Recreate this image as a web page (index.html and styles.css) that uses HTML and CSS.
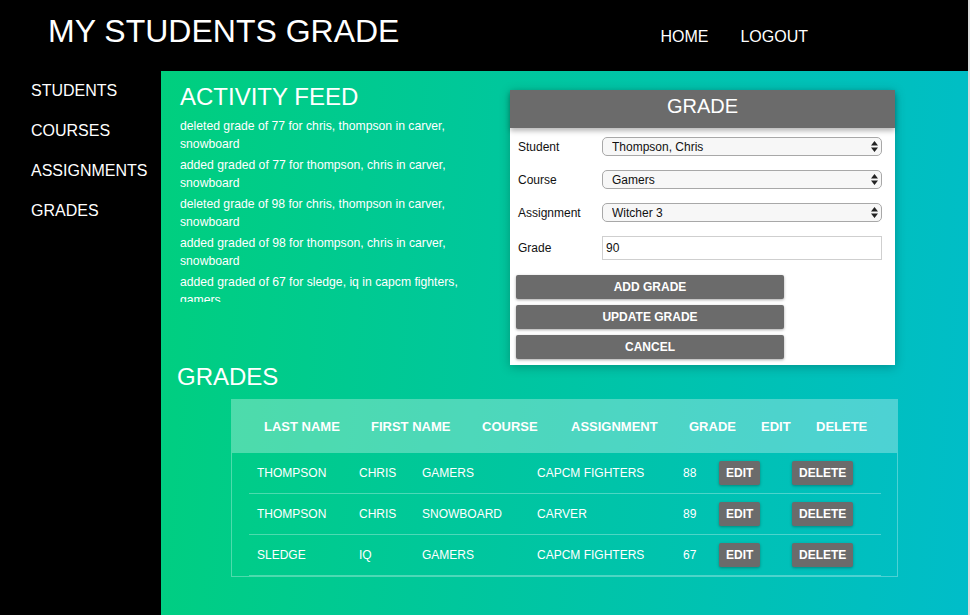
FILE: index.html
```html
<!DOCTYPE html>
<html lang="en">
<head>
<meta charset="utf-8">
<title>My Students Grade</title>
<link rel="stylesheet" href="styles.css">
</head>
<body>
<div class="app">
  <header class="topbar">
    <h1 class="brand">MY STUDENTS GRADE</h1>
    <nav class="topnav">
      <a href="#">HOME</a>
      <a href="#">LOGOUT</a>
    </nav>
  </header>

  <aside class="sidebar">
    <a href="#">STUDENTS</a>
    <a href="#">COURSES</a>
    <a href="#">ASSIGNMENTS</a>
    <a href="#">GRADES</a>
  </aside>

  <main class="content">
    <section class="top-row">
      <div class="feed">
        <h2 class="section-title">ACTIVITY FEED</h2>
        <ul class="feed-list">
          <li>deleted grade of 77 for chris, thompson in carver, snowboard</li>
          <li>added graded of 77 for thompson, chris in carver, snowboard</li>
          <li>deleted grade of 98 for chris, thompson in carver, snowboard</li>
          <li>added graded of 98 for thompson, chris in carver, snowboard</li>
          <li>added graded of 67 for sledge, iq in capcm fighters, gamers</li>
        </ul>
      </div>

      <form class="card">
        <div class="card-head">GRADE</div>
        <div class="card-body">
          <div class="field">
            <label class="label">Student</label>
            <div class="select-wrap">
              <select class="select"><option>Thompson, Chris</option></select>
              <svg class="arrows" width="7" height="11" viewBox="0 0 7 11"><path d="M3.5 0L7 4.5H0Z M0 6.5H7L3.5 11Z" fill="#222"/></svg>
            </div>
          </div>
          <div class="field">
            <label class="label">Course</label>
            <div class="select-wrap">
              <select class="select"><option>Gamers</option></select>
              <svg class="arrows" width="7" height="11" viewBox="0 0 7 11"><path d="M3.5 0L7 4.5H0Z M0 6.5H7L3.5 11Z" fill="#222"/></svg>
            </div>
          </div>
          <div class="field">
            <label class="label">Assignment</label>
            <div class="select-wrap">
              <select class="select"><option>Witcher 3</option></select>
              <svg class="arrows" width="7" height="11" viewBox="0 0 7 11"><path d="M3.5 0L7 4.5H0Z M0 6.5H7L3.5 11Z" fill="#222"/></svg>
            </div>
          </div>
          <div class="field field-input">
            <label class="label">Grade</label>
            <input class="input" type="text" value="90">
          </div>
          <div class="actions">
            <button type="button" class="btn">ADD GRADE</button>
            <button type="button" class="btn">UPDATE GRADE</button>
            <button type="button" class="btn">CANCEL</button>
          </div>
        </div>
      </form>
    </section>

    <section class="grades">
      <h2 class="section-title grades-title">GRADES</h2>
      <div class="table">
        <div class="thead">
          <span>LAST NAME</span>
          <span>FIRST NAME</span>
          <span>COURSE</span>
          <span>ASSIGNMENT</span>
          <span>GRADE</span>
          <span>EDIT</span>
          <span>DELETE</span>
        </div>
        <div class="tbody">
          <div class="tr">
            <span>THOMPSON</span><span>CHRIS</span><span>GAMERS</span><span>CAPCM FIGHTERS</span><span>88</span>
            <span><button type="button" class="btn-sm">EDIT</button></span>
            <span><button type="button" class="btn-sm">DELETE</button></span>
          </div>
          <div class="tr">
            <span>THOMPSON</span><span>CHRIS</span><span>SNOWBOARD</span><span>CARVER</span><span>89</span>
            <span><button type="button" class="btn-sm">EDIT</button></span>
            <span><button type="button" class="btn-sm">DELETE</button></span>
          </div>
          <div class="tr">
            <span>SLEDGE</span><span>IQ</span><span>GAMERS</span><span>CAPCM FIGHTERS</span><span>67</span>
            <span><button type="button" class="btn-sm">EDIT</button></span>
            <span><button type="button" class="btn-sm">DELETE</button></span>
          </div>
        </div>
      </div>
    </section>
  </main>
</div>
</body>
</html>
```

FILE: styles.css
```css
html, body {
  margin: 0;
  padding: 0;
}

body {
  font-family: "Liberation Sans", Arial, Helvetica, sans-serif;
  background: #dcdcdc;
  overflow: hidden;
}

.app {
  display: grid;
  grid-template-columns: 161px 807px;
  grid-template-rows: 71px 544px;
  width: 968px;
  height: 615px;
  overflow: hidden;
}

/* Top bar */
.topbar {
  grid-column: 1 / -1;
  background: #000;
  display: flex;
  align-items: flex-start;
  padding: 0 160px 0 48px;
}

.brand {
  margin: 15px 0 0;
  font-size: 32px;
  line-height: 32px;
  font-weight: normal;
  color: #fff;
}

.topnav {
  margin-left: auto;
  margin-top: 29px;
  display: flex;
  gap: 32px;
}

.topnav a {
  color: #fff;
  text-decoration: none;
  font-size: 16px;
  line-height: 16px;
}

/* Sidebar */
.sidebar {
  background: #000;
  display: flex;
  flex-direction: column;
  padding-left: 31px;
}

.sidebar a {
  color: #fff;
  text-decoration: none;
  font-size: 16px;
  line-height: 40px;
  height: 40px;
}

/* Main content */
.content {
  background: linear-gradient(95deg, #00cf7e 0%, #00c6a0 45%, #00bdc9 100%);
  padding: 12px 0 0 19px;
  overflow: hidden;
}

.top-row {
  display: flex;
  align-items: flex-start;
}

.feed {
  width: 300px;
}

.section-title {
  margin: 0;
  font-size: 24px;
  line-height: 28px;
  font-weight: normal;
  color: #fff;
}

.feed-list {
  list-style: none;
  margin: 6px 0 0;
  padding: 0;
  height: 185px;
  overflow: hidden;
}

.feed-list li {
  color: #fff;
  font-size: 12.2px;
  line-height: 18px;
  margin-bottom: 3px;
}

/* Grade card */
.card {
  width: 385px;
  margin: 7px 0 0 30px;
  background: #fff;
  box-shadow: 0 2px 10px rgba(0, 0, 0, 0.25);
}

.card-head {
  height: 38px;
  background: #6b6b6b;
  color: #fff;
  font-size: 20px;
  line-height: 32px;
  text-align: center;
  box-shadow: 0 3px 5px rgba(0, 0, 0, 0.28);
}

.card-body {
  padding: 9px 13px 6px 8px;
}

.field {
  display: grid;
  grid-template-columns: 84px 280px;
  align-items: center;
  height: 19px;
  margin-bottom: 14px;
}

.field-input {
  height: 24px;
  margin-bottom: 0;
}

.label {
  font-size: 12px;
  color: #111;
}

.select-wrap {
  position: relative;
  height: 19px;
}

.select {
  -webkit-appearance: none;
  appearance: none;
  display: block;
  box-sizing: border-box;
  width: 280px;
  height: 19px;
  margin: 0;
  border: 1px solid #a8a8a8;
  border-radius: 5px;
  background: #f7f7f7;
  font-family: "Liberation Sans", Arial, sans-serif;
  font-size: 12px;
  color: #111;
  padding: 0 0 0 9px;
}

.arrows {
  position: absolute;
  right: 4px;
  top: 4px;
  pointer-events: none;
}

.input {
  display: block;
  box-sizing: border-box;
  width: 280px;
  height: 24px;
  margin: 0;
  border: 1px solid #cfcfcf;
  padding: 0 3px;
  font-family: "Liberation Sans", Arial, sans-serif;
  font-size: 12px;
  color: #111;
}

.actions {
  margin: 15px 0 0 -2px;
  display: flex;
  flex-direction: column;
  gap: 6px;
}

.btn {
  display: block;
  width: 268px;
  height: 24px;
  border: 0;
  border-radius: 2px;
  background: #6b6b6b;
  color: #fff;
  font-family: "Liberation Sans", Arial, sans-serif;
  font-size: 12px;
  font-weight: bold;
  box-shadow: 0 1px 3px rgba(0, 0, 0, 0.35);
  padding: 0;
}

/* Grades table */
.grades-title {
  margin: -2px 0 0 -3px;
}

.table {
  box-sizing: border-box;
  width: 667px;
  margin: 8px 0 0 51px;
  border: 1px solid rgba(255, 255, 255, 0.3);
}

.thead {
  display: grid;
  grid-template-columns: 107px 111px 89px 118px 72px 55px auto;
  align-items: center;
  height: 53px;
  padding-left: 32px;
  background: rgba(255, 255, 255, 0.3);
  color: #fff;
  font-size: 13px;
  font-weight: bold;
}

.tbody {
  margin: 0 16px 0 17px;
}

.tr {
  display: grid;
  grid-template-columns: 102px 63px 115px 146px 36px 73px auto;
  align-items: center;
  height: 40px;
  padding-left: 8px;
  border-bottom: 1px solid rgba(255, 255, 255, 0.3);
  color: #fff;
  font-size: 12px;
}

.btn-sm {
  height: 24px;
  padding: 0 7px;
  border: 0;
  border-radius: 2px;
  background: #6b6b6b;
  color: #fff;
  font-family: "Liberation Sans", Arial, sans-serif;
  font-size: 12px;
  font-weight: bold;
  box-shadow: 0 1px 3px rgba(0, 0, 0, 0.3);
}
```
